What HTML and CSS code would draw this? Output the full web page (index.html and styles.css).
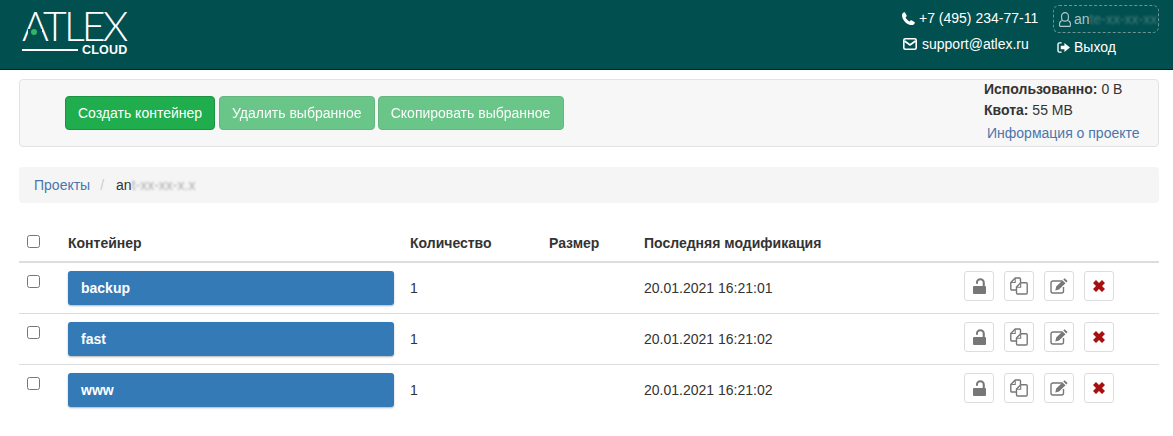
FILE: index.html
```html
<!DOCTYPE html>
<html lang="ru">
<head>
<meta charset="utf-8">
<title>Atlex Cloud</title>
<link rel="stylesheet" href="styles.css">
</head>
<body>
<svg class="sprite" width="0" height="0" aria-hidden="true">
  <symbol id="i-lock" viewBox="0 0 13 16"><path d="M1 8h11a1 1 0 0 1 1 1v6a1 1 0 0 1-1 1H1a1 1 0 0 1-1-1V9a1 1 0 0 1 1-1z"/><path d="M3 5.800V4.400C3 1.900 4.800.2 7.300.2s4.500 1.700 4.500 4.200V8.500H9.700V4.400C9.700 3 8.700 2.200 7.300 2.200S5 3 5 4.400v1.400z"/></symbol>
  <symbol id="i-copy" viewBox="0 0 18 18"><path fill="none" stroke="currentColor" stroke-width="1.400" stroke-linejoin="round" d="M6 13H1.800a1 1 0 0 1-1-1V5.500L5.200 1h4.300a1 1 0 0 1 1 1v3.500"/><path fill="none" stroke="currentColor" stroke-width="1.400" stroke-linejoin="round" d="M10.700 5.800h5.500a1 1 0 0 1 1 1V16a1 1 0 0 1-1 1H7.500a1 1 0 0 1-1-1V10z"/><path fill="none" stroke="currentColor" stroke-width="1.100" d="M5.200 1.500V5.500H1.200M10.700 6.300v4H6.800"/></symbol>
  <symbol id="i-edit" viewBox="0 0 18 16"><path fill="none" stroke="currentColor" stroke-width="1.400" d="M12.500 3H3a2 2 0 0 0-2 2v8a2 2 0 0 0 2 2h8.500a2 2 0 0 0 2-2V9"/><path fill="currentColor" d="M14.600.300l3 2.800-1.300 1.300-3-2.800zM12.500 2.400l3 2.800L9 11.500l-3.700.9.900-3.800z"/></symbol>
  <symbol id="i-x" viewBox="0 0 14 14"><path d="M3.500 0 7 3.500 10.500 0 14 3.500 10.500 7 14 10.500 10.500 14 7 10.500 3.500 14 0 10.500 3.500 7 0 3.500z"/></symbol>
</svg>

<header class="topbar">
  <a class="logo" href="#">
    <span class="logo-word">ATLEX<i class="logo-mask"></i><i class="logo-dot"></i></span>
    <span class="logo-sub"><i class="logo-line"></i><b>CLOUD</b></span>
  </a>
  <div class="contacts">
    <div class="contact contact-phone">
      <svg class="ic-phone" viewBox="0 0 14 14"><path fill="currentColor" d="M3.200.6 5 3.800c.2.400.1.800-.2 1.100l-1 .9c.9 1.800 2.600 3.500 4.400 4.400l.9-1c.3-.3.700-.4 1.100-.2l3.200 1.800c.4.200.5.600.4 1-.5 1.500-1.700 2.400-3.100 2.400C5.500 14.200-.2 8.500 0 3.300 0 1.900.900.700 2.300.200c.3-.1.700 0 .9.400z"/></svg>
      <span>+7 (495) 234-77-11</span>
    </div>
    <div class="contact contact-mail">
      <svg class="ic-mail" viewBox="0 0 14 12"><rect x=".8" y=".8" width="12.400" height="10.400" rx="1.500" fill="none" stroke="currentColor" stroke-width="1.600"/><path fill="none" stroke="currentColor" stroke-width="1.800" d="M1.500 3l5.500 4 5.500-4"/></svg>
      <span>support@atlex.ru</span>
    </div>
  </div>
  <div class="account">
    <div class="user-box">
      <svg class="ic-user" viewBox="0 0 12 15"><path fill="none" stroke="currentColor" stroke-width="1.100" d="M6 .6a3.400 3.400 0 0 1 3.400 3.400v1.700a3.400 3.400 0 0 1-6.800 0V4A3.400 3.400 0 0 1 6 .6zM3.500 8.300C1.700 8.900.6 10 .6 11.700v1.700a1 1 0 0 0 1 1h8.800a1 1 0 0 0 1-1v-1.700c0-1.700-1.100-2.800-2.900-3.400"/></svg>
      <span>an<span class="blur">te-xx-xx-xx</span></span>
    </div>
    <a class="logout" href="#">
      <svg class="ic-logout" viewBox="0 0 14 12"><path fill="none" stroke="currentColor" stroke-width="1.500" d="M5 1H2.500A1.500 1.500 0 0 0 1 2.500v7A1.500 1.500 0 0 0 2.500 11H5"/><path fill="currentColor" d="M8 1l6 5-6 5V8H4V4h4z"/></svg>
      <span>Выход</span>
    </a>
  </div>
</header>

<main class="content">
  <section class="toolbar">
    <div class="actions">
      <button class="btn btn-success" type="button">Создать контейнер</button>
      <button class="btn btn-success is-disabled" type="button">Удалить выбранное</button>
      <button class="btn btn-success is-disabled btn-wide" type="button">Скопировать выбранное</button>
    </div>
    <div class="quota">
      <div class="quota-line"><b>Использованно:</b> 0 B</div>
      <div class="quota-line"><b>Квота:</b> 55 MB</div>
      <a class="quota-link" href="#">Информация о проекте</a>
    </div>
  </section>

  <nav class="breadcrumb">
    <a href="#">Проекты</a>
    <span class="crumb-sep">/</span>
    <span class="crumb-current">an<span class="blur">t-xx-xx-x.x</span></span>
  </nav>

  <table class="containers">
    <colgroup>
      <col class="c-check"><col class="c-name"><col class="c-count"><col class="c-size"><col class="c-date"><col class="c-tools">
    </colgroup>
    <thead>
      <tr>
        <th><input class="check" type="checkbox"></th>
        <th>Контейнер</th>
        <th>Количество</th>
        <th>Размер</th>
        <th>Последняя модификация</th>
        <th></th>
      </tr>
    </thead>
    <tbody>
      <tr>
        <td><input class="check" type="checkbox"></td>
        <td><a class="bucket" href="#">backup</a></td>
        <td>1</td>
        <td></td>
        <td>20.01.2021 16:21:01</td>
        <td>
          <div class="tools">
            <button class="tool" type="button"><svg class="t-lock"><use href="#i-lock"/></svg></button>
            <button class="tool" type="button"><svg class="t-copy"><use href="#i-copy"/></svg></button>
            <button class="tool" type="button"><svg class="t-edit"><use href="#i-edit"/></svg></button>
            <button class="tool" type="button"><svg class="t-x"><use href="#i-x"/></svg></button>
          </div>
        </td>
      </tr>
      <tr>
        <td><input class="check" type="checkbox"></td>
        <td><a class="bucket" href="#">fast</a></td>
        <td>1</td>
        <td></td>
        <td>20.01.2021 16:21:02</td>
        <td>
          <div class="tools">
            <button class="tool" type="button"><svg class="t-lock"><use href="#i-lock"/></svg></button>
            <button class="tool" type="button"><svg class="t-copy"><use href="#i-copy"/></svg></button>
            <button class="tool" type="button"><svg class="t-edit"><use href="#i-edit"/></svg></button>
            <button class="tool" type="button"><svg class="t-x"><use href="#i-x"/></svg></button>
          </div>
        </td>
      </tr>
      <tr>
        <td><input class="check" type="checkbox"></td>
        <td><a class="bucket" href="#">www</a></td>
        <td>1</td>
        <td></td>
        <td>20.01.2021 16:21:02</td>
        <td>
          <div class="tools">
            <button class="tool" type="button"><svg class="t-lock"><use href="#i-lock"/></svg></button>
            <button class="tool" type="button"><svg class="t-copy"><use href="#i-copy"/></svg></button>
            <button class="tool" type="button"><svg class="t-edit"><use href="#i-edit"/></svg></button>
            <button class="tool" type="button"><svg class="t-x"><use href="#i-x"/></svg></button>
          </div>
        </td>
      </tr>
    </tbody>
  </table>
</main>
</body>
</html>
```

FILE: styles.css
```css
* { box-sizing: border-box; }
html, body { margin: 0; padding: 0; }
body {
  background: #fff;
  color: #333;
  font: 14px/20px "Liberation Sans", Arial, sans-serif;
  overflow: hidden;
}
a { text-decoration: none; color: #4a76ab; }
.sprite { position: absolute; }
.blur { filter: blur(1.1px); opacity: .38; }

/* header */
.topbar {
  height: 70px;
  background: #024f4f;
  border-bottom: 1px solid #0a1f1f;
  display: flex;
  align-items: flex-start;
  padding-right: 14px;
  color: #fff;
}
.logo {
  display: flex;
  flex-direction: column;
  align-items: flex-start;
  margin: 10px 0 0 22px;
  color: #fff;
  width: 106px;
}
.logo-word {
  position: relative;
  font: 300 41px/32px Lato, "Liberation Sans", sans-serif;
  letter-spacing: -2.9px;
  color: #fff;
  height: 32px;
}
.logo-mask {
  position: absolute;
  left: 6px;
  top: 19px;
  width: 14px;
  height: 5px;
  background: #024f4f;
}
.logo-dot {
  position: absolute;
  left: 9px;
  top: 19px;
  width: 6px;
  height: 6px;
  border-radius: 50%;
  background: #2fb565;
}
.logo-sub {
  display: flex;
  align-items: center;
  width: 105px;
  margin-top: 1px;
}
.logo-line { width: 56px; height: 2px; background: #fff; flex: none; }
.logo-sub b {
  font: 700 12.500px/14px "Liberation Sans", sans-serif;
  margin-left: 4px;
  letter-spacing: .2px;
}
.contacts {
  margin-left: auto;
  width: 136px;
  padding-top: 8px;
  margin-right: 15px;
  white-space: nowrap;
}
.contact { display: flex; align-items: center; height: 20px; }
.contact-mail { margin-top: 6px; }
.ic-phone { width: 13px; height: 13px; margin-right: 4px; color: #fff; flex: none; }
.ic-mail { width: 14px; height: 12px; margin: 0 5px 0 1px; color: #fff; flex: none; }
.account { width: 106px; padding-top: 5px; }
.user-box {
  display: flex;
  align-items: center;
  height: 28px;
  border: 1px dashed #6d9494;
  border-radius: 6px;
  padding-left: 5px;
  color: #aac3c3;
  white-space: nowrap;
}
.ic-user { width: 12px; height: 15px; margin-right: 3px; flex: none; color: #b5cccc; }
.logout { display: flex; align-items: center; margin: 4px 0 0 4px; height: 20px; color: #fff; }
.ic-logout { width: 13px; height: 11px; margin-right: 4px; }

/* content */
.content { padding: 9px 14px 0 19px; }
.toolbar {
  height: 68px;
  background: #f7f7f7;
  border: 1px solid #e3e3e3;
  border-radius: 4px;
  display: flex;
  justify-content: space-between;
  padding-left: 45px;
}
.actions { display: flex; align-items: flex-start; padding-top: 16px; gap: 4px; }
.btn {
  height: 34px;
  padding: 0 12px;
  border: 1px solid #1a9441;
  border-radius: 4px;
  background: #1fad4e;
  color: #fff;
  font: 14px/20px "Liberation Sans", sans-serif;
}
.is-disabled { opacity: .65; }
.btn-wide { margin-left: -1px; width: 186px; }
.quota { width: 174px; margin-top: -1px; }
.quota-line { height: 21px; line-height: 20px; }
.quota-link { display: block; margin: 2px 0 0 3px; line-height: 20px; }
.breadcrumb {
  margin-top: 20px;
  height: 36px;
  padding: 8px 15px;
  background: #f5f5f5;
  border-radius: 4px;
  display: flex;
  color: #333;
}
.crumb-sep { color: #ccc; margin: 0 12px 0 10px; }

/* table */
.containers {
  width: 1140px;
  margin-top: 21px;
  border-collapse: collapse;
  table-layout: fixed;
}
.c-check { width: 41px; }
.c-name { width: 342px; }
.c-count { width: 139px; }
.c-size { width: 95px; }
.c-date { width: 320px; }
.c-tools { width: 203px; }
th {
  text-align: left;
  padding: 8px;
  height: 38px;
  vertical-align: bottom;
  border-bottom: 2px solid #ddd;
  font-weight: 700;
}
td {
  padding: 8px;
  height: 51px;
  vertical-align: middle;
  border-bottom: 1px solid #ddd;
  color: #333;
}
tbody tr:last-child td { border-bottom: 0; }
.check {
  display: block;
  width: 13px;
  height: 13px;
  margin: 0;
}
th .check { margin-bottom: 5px; }
td .check { margin-top: -13px; }
.bucket {
  display: block;
  height: 34px;
  line-height: 35px;
  padding-left: 13px;
  border-radius: 3px;
  background: #337ab7;
  color: #fff;
  font-weight: 700;
  box-shadow: 0 1px 2px rgba(0, 0, 0, .3);
}
.tools { display: flex; gap: 10px; margin-top: -5px; }
.tool {
  width: 30px;
  height: 30px;
  padding: 0;
  display: flex;
  align-items: center;
  justify-content: center;
  background: #fff;
  border: 1px solid #ddd;
  border-radius: 3px;
  color: #777;
}
.t-lock { width: 13px; height: 16px; fill: #777; }
.t-copy { width: 18px; height: 18px; color: #777; }
.t-edit { width: 18px; height: 16px; color: #777; }
.t-x { width: 12px; height: 12px; fill: #a80f0f; }
```
